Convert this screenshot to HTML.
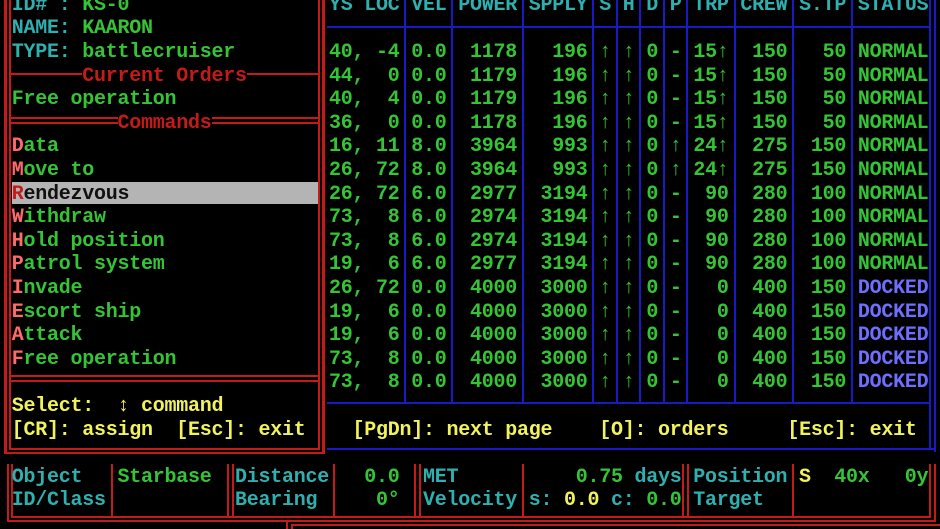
<!DOCTYPE html>
<html><head><meta charset="utf-8"><style>
html,body{margin:0;padding:0;background:#000;width:940px;height:529px;overflow:hidden;position:relative}
.r{position:absolute;white-space:pre;font-family:"Liberation Mono","DejaVu Sans Mono",monospace;font-size:20px;font-weight:bold;letter-spacing:-0.25px;line-height:23.6px;height:23.6px;margin-top:2px}
i{display:inline-block;width:11.75px;font-style:normal;letter-spacing:0;text-align:center}
.g{color:#35c435}.c{color:#2fb0b0}.y{color:#f2f25a}.rd{color:#c41a1a}.p{color:#ff6a6a}.b{color:#6e6eff}.k{color:#101010}
.L{position:absolute;background:#c41a1a}
.B{position:absolute;background:#1a1ac4}
.t{background:#000}
</style></head><body>
<div class="L" style="left:4px;top:0;width:3px;height:454px"></div>
<div class="L" style="left:9px;top:0;width:2px;height:450px"></div>
<div class="L" style="left:318px;top:0;width:2px;height:450px"></div>
<div class="L" style="left:322px;top:0;width:3px;height:454px"></div>
<div class="L" style="left:9px;top:73px;width:311px;height:2px"></div>
<div class="L" style="left:9px;top:117px;width:311px;height:2px"></div>
<div class="L" style="left:9px;top:122px;width:311px;height:2px"></div>
<div class="L" style="left:9px;top:375px;width:311px;height:2px"></div>
<div class="L" style="left:9px;top:380px;width:311px;height:2px"></div>
<div class="L" style="left:9px;top:448px;width:311px;height:2px"></div>
<div class="L" style="left:4px;top:452px;width:321px;height:2px"></div>
<div class="B" style="left:404px;top:0;width:2px;height:404px"></div>
<div class="B" style="left:451px;top:0;width:2px;height:404px"></div>
<div class="B" style="left:522px;top:0;width:2px;height:404px"></div>
<div class="B" style="left:592px;top:0;width:2px;height:404px"></div>
<div class="B" style="left:616px;top:0;width:2px;height:404px"></div>
<div class="B" style="left:639px;top:0;width:2px;height:404px"></div>
<div class="B" style="left:663px;top:0;width:2px;height:404px"></div>
<div class="B" style="left:686px;top:0;width:2px;height:404px"></div>
<div class="B" style="left:734px;top:0;width:2px;height:404px"></div>
<div class="B" style="left:792px;top:0;width:2px;height:404px"></div>
<div class="B" style="left:851px;top:0;width:2px;height:404px"></div>
<div class="B" style="left:929px;top:0;width:2px;height:450px"></div>
<div class="B" style="left:934px;top:0;width:2px;height:452px"></div>
<div class="B" style="left:327px;top:26px;width:603px;height:2px"></div>
<div class="B" style="left:327px;top:402px;width:603px;height:2px"></div>
<div class="B" style="left:327px;top:448px;width:609px;height:2px"></div>
<div class="L" style="left:7px;top:464px;width:2px;height:58px"></div>
<div class="L" style="left:11px;top:464px;width:2px;height:54px"></div>
<div class="L" style="left:111px;top:464px;width:2px;height:54px"></div>
<div class="L" style="left:227px;top:464px;width:2px;height:54px"></div>
<div class="L" style="left:232px;top:464px;width:2px;height:54px"></div>
<div class="L" style="left:333px;top:464px;width:2px;height:54px"></div>
<div class="L" style="left:414px;top:464px;width:2px;height:54px"></div>
<div class="L" style="left:419px;top:464px;width:2px;height:54px"></div>
<div class="L" style="left:522px;top:464px;width:2px;height:54px"></div>
<div class="L" style="left:682px;top:464px;width:2px;height:54px"></div>
<div class="L" style="left:687px;top:464px;width:2px;height:54px"></div>
<div class="L" style="left:792px;top:464px;width:2px;height:54px"></div>
<div class="L" style="left:929px;top:464px;width:2px;height:54px"></div>
<div class="L" style="left:934px;top:464px;width:2px;height:58px"></div>
<div class="L" style="left:11px;top:516px;width:920px;height:2px"></div>
<div class="L" style="left:7px;top:520px;width:929px;height:2px"></div>
<div class="L" style="left:286px;top:520px;width:2px;height:9px"></div>
<div class="L" style="left:291px;top:524px;width:2px;height:5px"></div>
<div class="L" style="left:291px;top:524px;width:649px;height:2px"></div>
<div style="position:absolute;left:12px;top:182px;width:306px;height:22px;background:#b4b4b4"></div>

<div class="r" style="top:-8.3px;left:11.75px"><span class="c">ID# : </span><span class="g">KS-0</span></div>
<div class="r" style="top:15.3px;left:11.75px"><span class="c">NAME: </span><span class="g">KAARON</span></div>
<div class="r" style="top:38.9px;left:11.75px"><span class="c">TYPE: </span><span class="g">battlecruiser</span></div>
<div class="r" style="top:62.5px;left:82.25px"><span class="rd t">Current Orders</span></div>
<div class="r" style="top:86.1px;left:11.75px"><span class="g">Free operation</span></div>
<div class="r" style="top:109.7px;left:117.5px"><span class="rd t">Commands</span></div>
<div class="r" style="top:133.3px;left:11.75px"><span class="p">D</span><span class="g">ata</span></div>
<div class="r" style="top:156.9px;left:11.75px"><span class="p">M</span><span class="g">ove to</span></div>
<div class="r" style="top:180.5px;left:11.75px"><span class="rd">R</span><span class="k">endezvous</span></div>
<div class="r" style="top:204.1px;left:11.75px"><span class="p">W</span><span class="g">ithdraw</span></div>
<div class="r" style="top:227.7px;left:11.75px"><span class="p">H</span><span class="g">old position</span></div>
<div class="r" style="top:251.3px;left:11.75px"><span class="p">P</span><span class="g">atrol system</span></div>
<div class="r" style="top:274.9px;left:11.75px"><span class="p">I</span><span class="g">nvade</span></div>
<div class="r" style="top:298.5px;left:11.75px"><span class="p">E</span><span class="g">scort ship</span></div>
<div class="r" style="top:322.1px;left:11.75px"><span class="p">A</span><span class="g">ttack</span></div>
<div class="r" style="top:345.7px;left:11.75px"><span class="p">F</span><span class="g">ree operation</span></div>
<div class="r y" style="top:392.9px;left:11.75px">Select:  <i>↕</i> command</div>
<div class="r y" style="top:416.5px;left:11.75px">[CR]: assign  [Esc]: exit</div>

<div class="r c" style="top:-8.3px;left:329px">YS LOC VEL POWER SPPLY S H D P TRP CREW S.TP STATUS</div>
<div class="r g" style="top:38.9px;left:329px">40, -4 0.0  1178   196 <i>↑</i> <i>↑</i> 0 - 15<i>↑</i>  150   50 NORMAL</div>
<div class="r g" style="top:62.5px;left:329px">44,  0 0.0  1179   196 <i>↑</i> <i>↑</i> 0 - 15<i>↑</i>  150   50 NORMAL</div>
<div class="r g" style="top:86.1px;left:329px">40,  4 0.0  1179   196 <i>↑</i> <i>↑</i> 0 - 15<i>↑</i>  150   50 NORMAL</div>
<div class="r g" style="top:109.7px;left:329px">36,  0 0.0  1178   196 <i>↑</i> <i>↑</i> 0 - 15<i>↑</i>  150   50 NORMAL</div>
<div class="r g" style="top:133.3px;left:329px">16, 11 8.0  3964   993 <i>↑</i> <i>↑</i> 0 <i>↑</i> 24<i>↑</i>  275  150 NORMAL</div>
<div class="r g" style="top:156.9px;left:329px">26, 72 8.0  3964   993 <i>↑</i> <i>↑</i> 0 <i>↑</i> 24<i>↑</i>  275  150 NORMAL</div>
<div class="r g" style="top:180.5px;left:329px">26, 72 6.0  2977  3194 <i>↑</i> <i>↑</i> 0 -  90  280  100 NORMAL</div>
<div class="r g" style="top:204.1px;left:329px">73,  8 6.0  2974  3194 <i>↑</i> <i>↑</i> 0 -  90  280  100 NORMAL</div>
<div class="r g" style="top:227.7px;left:329px">73,  8 6.0  2974  3194 <i>↑</i> <i>↑</i> 0 -  90  280  100 NORMAL</div>
<div class="r g" style="top:251.3px;left:329px">19,  6 6.0  2977  3194 <i>↑</i> <i>↑</i> 0 -  90  280  100 NORMAL</div>
<div class="r g" style="top:274.9px;left:329px">26, 72 0.0  4000  3000 <i>↑</i> <i>↑</i> 0 -   0  400  150 <span class="b">DOCKED</span></div>
<div class="r g" style="top:298.5px;left:329px">19,  6 0.0  4000  3000 <i>↑</i> <i>↑</i> 0 -   0  400  150 <span class="b">DOCKED</span></div>
<div class="r g" style="top:322.1px;left:329px">19,  6 0.0  4000  3000 <i>↑</i> <i>↑</i> 0 -   0  400  150 <span class="b">DOCKED</span></div>
<div class="r g" style="top:345.7px;left:329px">73,  8 0.0  4000  3000 <i>↑</i> <i>↑</i> 0 -   0  400  150 <span class="b">DOCKED</span></div>
<div class="r g" style="top:369.3px;left:329px">73,  8 0.0  4000  3000 <i>↑</i> <i>↑</i> 0 -   0  400  150 <span class="b">DOCKED</span></div>
<div class="r y" style="top:416.5px;left:352.5px">[PgDn]: next page    [O]: orders     [Esc]: exit</div>

<div class="r c" style="top:463.7px;left:11.75px">Object</div>
<div class="r c" style="top:487.3px;left:11.75px">ID/Class</div>
<div class="r g" style="top:463.7px;left:117.5px">Starbase</div>
<div class="r c" style="top:463.7px;left:235px">Distance</div>
<div class="r c" style="top:487.3px;left:235px">Bearing</div>
<div class="r g" style="top:463.7px;left:364.25px">0.0</div>
<div class="r g" style="top:487.3px;left:376px">0°</div>
<div class="r c" style="top:463.7px;left:423px">MET</div>
<div class="r c" style="top:487.3px;left:423px">Velocity</div>
<div class="r" style="top:463.7px;left:575.75px"><span class="g">0.75 </span><span class="c">days</span></div>
<div class="r" style="top:487.3px;left:528.75px"><span class="c">s: </span><span class="y">0.0 </span><span class="c">c: </span><span class="g">0.0</span></div>
<div class="r c" style="top:463.7px;left:693.25px">Position</div>
<div class="r c" style="top:487.3px;left:693.25px">Target</div>
<div class="r" style="top:463.7px;left:799px"><span class="y">S</span><span class="g">  40x   0y</span></div>
</body></html>
